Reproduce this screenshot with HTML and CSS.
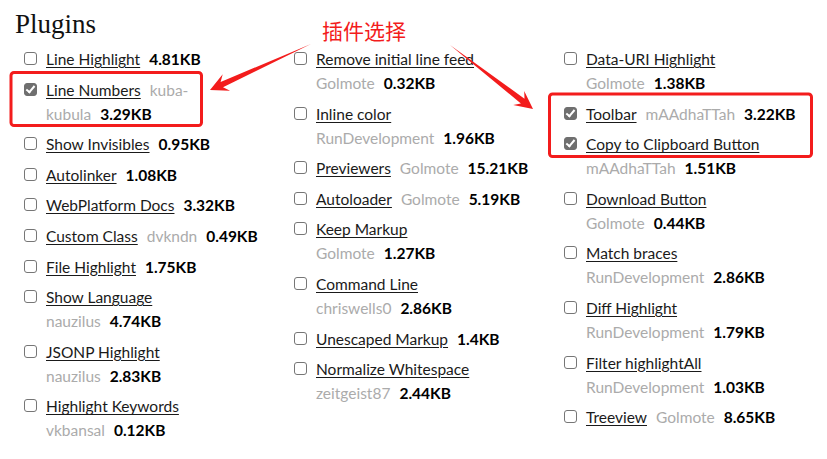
FILE: index.html
```html
<!DOCTYPE html>
<html lang="zh">
<head>
<meta charset="utf-8">
<title>Plugins</title>
<link rel="stylesheet" href="styles.css">
</head>
<body>
<main class="page">
  <h1 class="title">Plugins</h1>
  <div class="cols">
    <ul class="col">
      <li class="item"><span class="cb"></span><span class="txt"><a class="name">Line Highlight</a> <b class="size">4.81KB</b></span></li>
      <li class="item"><span class="cb on"></span><span class="txt"><a class="name">Line Numbers</a> <span class="author part">kuba-</span><span class="author">kubula</span>&nbsp;<b class="size">3.29KB</b></span></li>
      <li class="item"><span class="cb"></span><span class="txt"><a class="name">Show Invisibles</a> <b class="size">0.95KB</b></span></li>
      <li class="item"><span class="cb"></span><span class="txt"><a class="name">Autolinker</a> <b class="size">1.08KB</b></span></li>
      <li class="item"><span class="cb"></span><span class="txt"><a class="name">WebPlatform Docs</a> <b class="size">3.32KB</b></span></li>
      <li class="item"><span class="cb"></span><span class="txt"><a class="name">Custom Class</a> <span class="author">dvkndn</span>&nbsp;<b class="size">0.49KB</b></span></li>
      <li class="item"><span class="cb"></span><span class="txt"><a class="name">File Highlight</a> <b class="size">1.75KB</b></span></li>
      <li class="item"><span class="cb"></span><span class="txt"><a class="name">Show Language</a> <span class="author">nauzilus</span>&nbsp;<b class="size">4.74KB</b></span></li>
      <li class="item"><span class="cb"></span><span class="txt"><a class="name">JSONP Highlight</a> <span class="author">nauzilus</span>&nbsp;<b class="size">2.83KB</b></span></li>
      <li class="item"><span class="cb"></span><span class="txt"><a class="name">Highlight Keywords</a> <span class="author">vkbansal</span>&nbsp;<b class="size">0.12KB</b></span></li>
    </ul>
    <ul class="col">
      <li class="item"><span class="cb"></span><span class="txt"><a class="name">Remove initial line feed</a> <span class="author">Golmote</span>&nbsp;<b class="size">0.32KB</b></span></li>
      <li class="item"><span class="cb"></span><span class="txt"><a class="name">Inline color</a> <span class="author">RunDevelopment</span>&nbsp;<b class="size">1.96KB</b></span></li>
      <li class="item"><span class="cb"></span><span class="txt"><a class="name">Previewers</a> <span class="author">Golmote</span>&nbsp;<b class="size">15.21KB</b></span></li>
      <li class="item"><span class="cb"></span><span class="txt"><a class="name">Autoloader</a> <span class="author">Golmote</span>&nbsp;<b class="size">5.19KB</b></span></li>
      <li class="item"><span class="cb"></span><span class="txt"><a class="name">Keep Markup</a> <span class="author">Golmote</span>&nbsp;<b class="size">1.27KB</b></span></li>
      <li class="item"><span class="cb"></span><span class="txt"><a class="name">Command Line</a> <span class="author">chriswells0</span>&nbsp;<b class="size">2.86KB</b></span></li>
      <li class="item"><span class="cb"></span><span class="txt"><a class="name">Unescaped Markup</a> <b class="size">1.4KB</b></span></li>
      <li class="item"><span class="cb"></span><span class="txt"><a class="name">Normalize Whitespace</a> <span class="author">zeitgeist87</span>&nbsp;<b class="size">2.44KB</b></span></li>
    </ul>
    <ul class="col">
      <li class="item"><span class="cb"></span><span class="txt"><a class="name">Data-URI Highlight</a> <span class="author">Golmote</span>&nbsp;<b class="size">1.38KB</b></span></li>
      <li class="item"><span class="cb on"></span><span class="txt"><a class="name">Toolbar</a> <span class="author">mAAdhaTTah</span>&nbsp;<b class="size">3.22KB</b></span></li>
      <li class="item"><span class="cb on"></span><span class="txt"><a class="name">Copy to Clipboard Button</a> <span class="author">mAAdhaTTah</span>&nbsp;<b class="size">1.51KB</b></span></li>
      <li class="item"><span class="cb"></span><span class="txt"><a class="name">Download Button</a> <span class="author">Golmote</span>&nbsp;<b class="size">0.44KB</b></span></li>
      <li class="item"><span class="cb"></span><span class="txt"><a class="name">Match braces</a> <span class="author">RunDevelopment</span>&nbsp;<b class="size">2.86KB</b></span></li>
      <li class="item"><span class="cb"></span><span class="txt"><a class="name">Diff Highlight</a> <span class="author">RunDevelopment</span>&nbsp;<b class="size">1.79KB</b></span></li>
      <li class="item"><span class="cb"></span><span class="txt"><a class="name">Filter highlightAll</a> <span class="author">RunDevelopment</span>&nbsp;<b class="size">1.03KB</b></span></li>
      <li class="item"><span class="cb"></span><span class="txt"><a class="name">Treeview</a> <span class="author">Golmote</span>&nbsp;<b class="size">8.65KB</b></span></li>
    </ul>
  </div>

  <span class="note">插件选择</span>
  <svg class="annot" width="827" height="459" viewBox="0 0 827 459" aria-hidden="true">
    <rect x="11" y="72.5" width="190.5" height="53" rx="3" fill="none" stroke="#f31c1c" stroke-width="3"/>
    <rect x="549.5" y="94" width="262" height="62.5" rx="3" fill="none" stroke="#f31c1c" stroke-width="3"/>
    <polygon fill="#f31c1c" points="311,44 220.6,81.9 222.7,74.3 210,90 230.1,90.7 223,87.3"/>
    <polygon fill="#f31c1c" points="450,45 524.5,98.7 524.2,90.9 533,109 513.2,105.1 520.9,103.5"/>
  </svg>
</main>
</body>
</html>
```

FILE: styles.css
```css
html, body {
  margin: 0;
  padding: 0;
  background: #ffffff;
}

.page {
  position: relative;
  width: 827px;
  height: 459px;
  overflow: hidden;
  padding: 8px 0 0 0;
  box-sizing: border-box;
  font-family: "Lato", "Liberation Sans", sans-serif;
  font-size: 15.5px;
  color: #222;
}

.title {
  margin: 0 0 0 15px;
  font-family: "Liberation Serif", serif;
  font-weight: normal;
  font-size: 27px;
  line-height: 32px;
  color: #111;
}

.cols {
  display: grid;
  grid-template-columns: 270px 270px 240px;
  margin-top: 7px;
  padding-left: 24px;
}

.col {
  list-style: none;
  margin: 0;
  padding: 0;
  display: flex;
  flex-direction: column;
  row-gap: 6.6px;
}

.item {
  display: flex;
  align-items: flex-start;
  width: 235px;
  line-height: 24px;
}

.cb {
  flex: none;
  width: 11px;
  height: 11px;
  margin-top: 5px;
  margin-right: 9px;
  border: 1px solid #767676;
  border-radius: 3px;
  background: #fff;
  position: relative;
}

.cb.on {
  background: #6f6f6f;
  border-color: #6f6f6f;
}

.cb.on::after {
  content: "";
  position: absolute;
  left: 3px;
  top: 0px;
  width: 3px;
  height: 7px;
  border: solid #fff;
  border-width: 0 2px 2px 0;
  transform: rotate(40deg);
}

.txt {
  flex: 1;
  min-width: 0;
}

.name {
  color: #1a1a1a;
  text-decoration: underline;
  text-underline-offset: 2px;
  margin-right: 5px;
}

.author {
  color: #ababab;
  margin-right: 5px;
}

.author.part {
  margin-right: 0;
}

.size {
  color: #000;
  font-weight: bold;
}

.note {
  position: absolute;
  left: 322px;
  top: 16px;
  font-family: "Noto Sans CJK SC", sans-serif;
  font-size: 21px;
  line-height: 28px;
  color: #f31c1c;
}

.annot {
  position: absolute;
  left: 0;
  top: 0;
  pointer-events: none;
}
```
